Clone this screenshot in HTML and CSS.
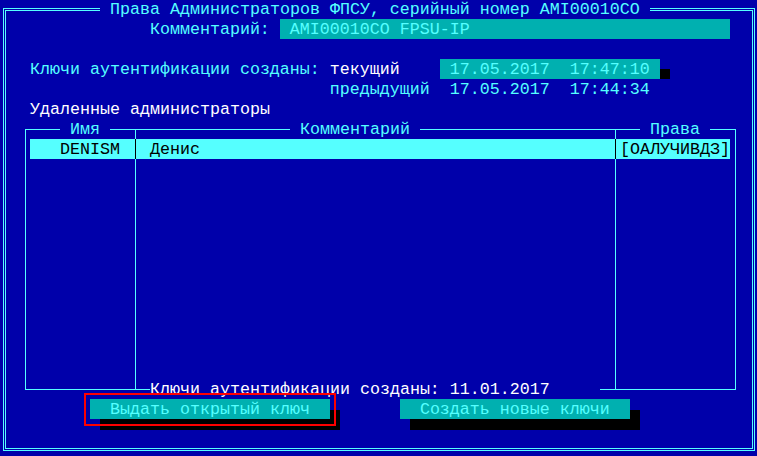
FILE: index.html
```html
<!DOCTYPE html>
<html lang="ru">
<head>
<meta charset="utf-8">
<title>Права Администраторов ФПСУ</title>
<link rel="stylesheet" href="styles.css">
</head>
<body>
<div class="frame">
<div class="title"> Права Администраторов ФПСУ, серийный номер AMI00010CO </div>
<div class="row ind-14"><span>Комментарий: </span><span class="field w45"> AMI00010CO FPSU-IP</span></div>
<div class="row"></div>
<div class="row ind-2"><span>Ключи аутентификации созданы: </span><span class="wh">текущий    </span><span class="field w22"> 17.05.2017  17:47:10</span><span class="shade"></span></div>
<div class="row ind-32"><span>предыдущий  17.05.2017  17:44:34</span></div>
<div class="row ind-2"><span class="wh">Удаленные администраторы</span></div>
<div class="table">
<div class="col c-name"><div class="th"><span> Имя </span></div><div class="hl">DENISM</div></div>
<div class="col c-comment"><div class="th"><span> Комментарий </span></div><div class="hl">Денис</div><div class="foot"><span>Ключи аутентификации созданы: 11.01.2017     </span></div></div>
<div class="col c-rights"><div class="th"><span> Права </span></div><div class="hl">[ОАЛУЧИВДЗ]</div></div>
</div>
<div class="buttons"><div class="btn btn-issue">  Выдать открытый ключ  </div><div class="btn">  Создать новые ключи  </div></div>
</div>
</body>
</html>
```
FILE: styles.css
```css
* { box-sizing: border-box; margin: 0; padding: 0; }
html, body {
  background: #0000aa;
  width: 757px;
  height: 456px;
  overflow: hidden;
}
body {
  font-family: "Liberation Mono", "DejaVu Sans Mono", monospace;
  font-size: 16.6667px;
  line-height: 22px;
  color: #55ffff;
}
.title, .row > span, .th, .hl, .foot, .btn { white-space: pre; }
.frame {
  position: relative;
  margin: 8px 0 0 3px;
  width: 752px;
  height: 443px;
  border: 3px double #55ffff;
  padding: 8px 0 0 4px;
}
.title {
  position: absolute;
  left: 94px;
  top: -12px;
  height: 20px;
  background: #0000aa;
}
.row { display: flex; height: 20px; }
.row > span { flex: none; }
.ind-2 { padding-left: 2ch; }
.ind-14 { padding-left: 14ch; }
.ind-32 { padding-left: 32ch; }
.wh { color: #ffffff; }
.field { background: #00b0b0; height: 20px; }
.w45 { width: 45ch; }
.w22 { width: 22ch; }
.shade { width: 1ch; height: 10px; align-self: flex-end; background: #000; }

.table {
  display: grid;
  grid-template-columns: 110px 480px 119px;
  width: 711px;
  height: 261px;
  margin: 10px 0 0 15px;
  border: 1px solid #55ffff;
}
.col {
  display: flex;
  flex-direction: column;
  border-right: 1px solid #55ffff;
}
.c-rights { border-right: 0; }
.th { margin-top: -11px; height: 20px; flex: none; }
.th span, .foot span { background: #0000aa; }
.c-name .th { padding-left: 34px; }
.c-comment .th { padding-left: 154px; }
.c-rights .th { padding-left: 24px; }
.hl { height: 20px; flex: none; background: #55ffff; color: #000; }
.c-name .hl { margin-left: 4px; margin-right: -1px; border-right: 1px solid #000; padding-left: 30px; }
.c-comment .hl { margin-right: -1px; border-right: 1px solid #000; padding-left: 14px; }
.c-rights .hl { margin-right: 5px; padding-left: 4px; }
.foot { margin-top: auto; margin-bottom: -10px; height: 20px; flex: none; padding-left: 14px; color: #ffffff; }

.buttons { display: flex; gap: 70px; margin: 9px 0 0 80px; }
.btn {
  position: relative;
  height: 20px;
  background: #00b0b0;
  color: #55ffff;
  box-shadow: 10px 11px 0 #000;
}
.btn-issue::after {
  content: "";
  position: absolute;
  top: -6px;
  left: -6px;
  right: -6px;
  bottom: -7px;
  border: 2px solid #ff0000;
}
```
